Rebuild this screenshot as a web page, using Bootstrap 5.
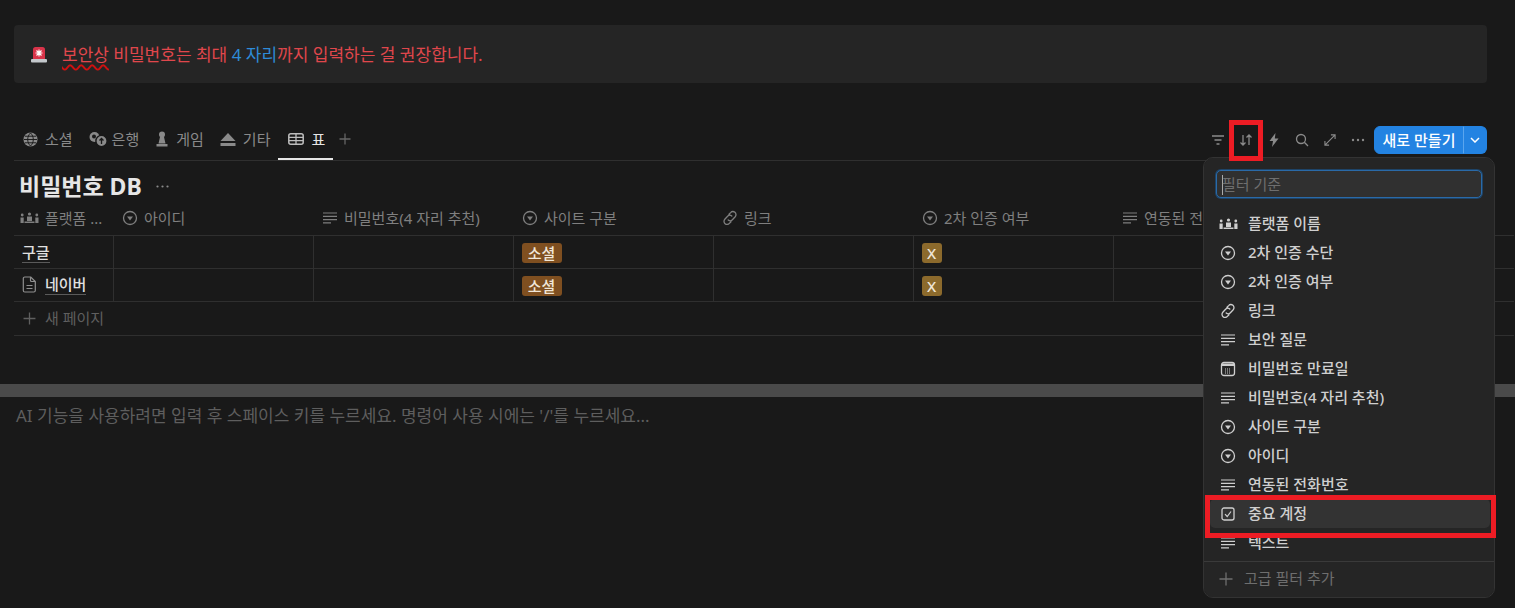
<!DOCTYPE html>
<html lang="ko">

<head>
  <meta charset="UTF-8" />
  <meta name="viewport" content="width=device-width, initial-scale=1" />
  <title>비밀번호 DB</title>
  <link href="https://cdn.jsdelivr.net/npm/bootstrap@5.3.3/dist/css/bootstrap.min.css" rel="stylesheet">
  <style>
    html, body {
      height: 608px;
      overflow: hidden;
    }

    body {
      background-color: #191919;
      color: #d4d4d4;
      font-family: "Noto Sans", "Noto Sans CJK KR", sans-serif;
      font-size: 15px;
      position: relative;
    }

    svg {
      flex: none;
      display: block;
    }

    .page-pad {
      padding: 25px 0 0 14px;
    }

    .notice-box {
      width: 1473px;
      height: 58px;
      background-color: #252525;
      border-radius: 4px;
      padding: 1px 0 0 16px;
      gap: 14px;
      font-size: 17px;
      color: #e0474c;
    }

    .notice-blue {
      color: #2e8bd8;
    }

    .notice-wavy {
      text-decoration: underline wavy #d01010 1.5px;
      text-underline-offset: 3px;
    }

    .view-bar {
      width: 1473px;
      height: 40px;
      margin-top: 38px;
      border-bottom: 1px solid #2f2f2f;
    }

    .view-tab {
      height: 39px;
      padding: 0 8px 3px;
      gap: 7px;
      color: #8a8a8a;
      white-space: nowrap;
    }

    .view-tab.on {
      color: #e6e6e6;
      border-bottom: 2px solid #e6e6e6;
      padding: 0 8px 1px 10px;
    }

    .tab-first {
      padding-left: 9px;
    }

    .tab-coin {
      gap: 5px;
    }

    .view-add {
      color: #666;
      margin: 0 0 3px 6px;
    }

    .tool-row {
      margin-top: 5px;
      height: 28px;
      color: #8a8a8a;
    }

    .tool-btn {
      width: 28px;
      height: 28px;
    }

    .new-group {
      margin-left: 2px;
      height: 28px;
    }

    .new-main, .new-caret {
      --bs-btn-bg: #2383e2;
      --bs-btn-border-color: #2383e2;
      --bs-btn-color: #fff;
      font-size: 15px;
      font-weight: 500;
      padding: 0;
      height: 28px;
      border-radius: 6px;
    }

    .new-main {
      width: 90px;
    }

    .new-caret {
      width: 24px;
      border-left-color: #5aa5ee;
    }

    .db-title {
      height: 43px;
      padding: 7px 0 0 5px;
      gap: 14px;
      font-size: 23px;
      font-weight: 700;
      color: #e6e6e6;
    }

    .db-title .title-dots {
      color: #8a8a8a;
    }

    .grid-wrap {
      width: 1501px;
      overflow: hidden;
    }

    .grid-table {
      --bs-table-bg: transparent;
      --bs-table-color: #d4d4d4;
      --bs-table-border-color: #2f2f2f;
      table-layout: fixed;
      width: 1500px;
      margin: 0;
    }

    .grid-table th, .grid-table td {
      padding: 0 8px;
      border-bottom: 1px solid #2f2f2f;
      vertical-align: middle;
      white-space: nowrap;
      overflow: hidden;
    }

    .grid-table th {
      height: 31px;
      padding: 0 0 2px 9px;
      font-weight: 400;
      color: #7f7f7f;
    }

    .grid-table th.head-first {
      padding-left: 6px;
    }

    .grid-table td {
      height: 33px;
    }

    .grid-table td + td {
      border-left: 1px solid #2f2f2f;
    }

    .head-cell {
      gap: 6px;
    }

    .page-name {
      display: inline-block;
      font-weight: 500;
      color: #e0e0e0;
      border-bottom: 1px solid #5a5a5a;
      line-height: 20px;
      vertical-align: middle;
    }

    .tag-social, .tag-x {
      border-radius: 3px;
      height: 20px;
      line-height: 20px;
      color: #f0e6d8;
      font-weight: 500;
      display: inline-block;
      vertical-align: middle;
    }

    .tag-social {
      width: 40px;
      text-align: center;
      background-color: #7f4f20;
    }

    .tag-x {
      width: 20px;
      text-align: center;
      background-color: #8c6a2c;
    }

    .grid-table td.add-row {
      height: 34px;
      padding-left: 9px;
      color: #5f5f5f;
    }

    .add-inner {
      gap: 9px;
    }

    .split-bar {
      height: 13px;
      margin-top: 48px;
      background-color: #4a4a4a;
    }

    .editor-hint {
      padding: 6px 0 0 16px;
      color: #5e5e5e;
      font-size: 17px;
    }

    .filter-menu {
      --bs-dropdown-bg: #252525;
      --bs-dropdown-border-color: #333;
      --bs-dropdown-border-radius: 10px;
      --bs-dropdown-padding-y: 0;
      --bs-dropdown-link-color: #cfcfcf;
      --bs-dropdown-font-size: 15px;
      left: 1203px;
      top: 157px;
      width: 292px;
      height: 441px;
    }

    .filter-input {
      display: block;
      width: 266px;
      height: 28px;
      margin: 12px 0 11px 12px;
      background: linear-gradient(#aaa, #aaa) no-repeat 5px 4px / 1px 20px, #303030;
      border: 1px solid #2a6aa8;
      box-shadow: 0 0 0 1px #1e4468;
      border-radius: 5px;
      color: #ddd;
      font-size: 15px;
      padding: 0 5px;
    }

    .filter-input::placeholder {
      color: #6e6e6e;
    }

    .filter-item {
      height: 29px;
      width: 280px;
      margin-left: 6px;
      padding: 0 0 0 10px;
      gap: 12px;
      border-radius: 5px;
      font-weight: 500;
    }

    .filter-item.people-item {
      padding-left: 9px;
      gap: 10px;
    }

    .filter-item.picked {
      background-color: #333;
    }

    .filter-foot {
      border-top: 1px solid #3a3a3a;
      margin-top: 4px;
      height: 34px;
      padding-left: 15px;
      gap: 11px;
      color: #6e6e6e;
    }

    .red-frame {
      position: absolute;
      border: 5px solid #ed1c24;
      pointer-events: none;
      z-index: 1050;
    }

    .frame-sort {
      left: 1229px;
      top: 120px;
      width: 34px;
      height: 41px;
    }

    .frame-item {
      left: 1205px;
      top: 495px;
      width: 291px;
      height: 43px;
    }
  </style>
</head>

<body>

  <!-- icons -->
  <svg width="0" height="0" class="position-absolute">
    <symbol id="ic-select" viewBox="0 0 16 16">
      <circle cx="8" cy="8" r="6.500" fill="none" stroke="currentColor" stroke-width="1.300" />
      <path d="M5 6.500h6L8 10.500z" fill="currentColor" />
    </symbol>
    <symbol id="ic-text" viewBox="0 0 16 16">
      <path d="M1 3h14M1 6.300h14M1 9.600h14M1 12.900h8" stroke="currentColor" stroke-width="1.200" fill="none" />
    </symbol>
    <symbol id="ic-link" viewBox="0 0 16 16">
      <path d="M7 4.300l1.600-1.700a3 3 0 0 1 4.600 4.100l-2.800 3a3 3 0 0 1-4.200.2M9 11.700l-1.600 1.700a3 3 0 0 1-4.600-4.100l2.800-3a3 3 0 0 1 4.200-.2" stroke="currentColor" stroke-width="1.300" fill="none" stroke-linecap="round" />
    </symbol>
    <symbol id="ic-people" viewBox="0 0 19 16">
      <g fill="currentColor">
        <circle cx="2.200" cy="5" r="1.400" /><circle cx="9.500" cy="4" r="1.600" /><circle cx="16.800" cy="5" r="1.400" />
        <path d="M0.500 7.500h3.200v5.500H0.500zM7 6.500h5v4.500H7zM15.300 7.500h3.200v5.500h-3.200zM4.500 11.500h10v1.500h-10z" />
      </g>
    </symbol>
  </svg>

  <div class="page-pad">
    <div class="notice-box d-flex align-items-center">
      <svg width="18" height="18" viewBox="0 0 18 18">
        <path d="M3 13V3.500A2.500 2.500 0 0 1 5.500 1h7A2.500 2.500 0 0 1 15 3.500V13z" fill="#d8344a" />
        <path d="M9 3.500v7M5.500 7h7M6.500 4.500l5 5M11.500 4.500l-5 5" stroke="#fff" stroke-width="1.100" />
        <rect x="1" y="13" width="16" height="3.500" rx="1" fill="#c4c8cc" />
      </svg>
      <span><span class="notice-wavy">보안상</span> 비밀번호는 최대 <span class="notice-blue">4 자리</span>까지 입력하는 걸 권장합니다.</span>
    </div>

    <div class="view-bar d-flex justify-content-between">
      <div class="d-flex align-items-center">
        <div class="view-tab tab-first d-flex align-items-center">
          <svg width="15" height="15" viewBox="0 0 16 16">
            <circle cx="8" cy="8" r="7.500" fill="#8a8a8a" />
            <path d="M1 8h14M8 1c-4 4-4 10 0 14M8 1c4 4 4 10 0 14M2 4.500h12M2 11.500h12" stroke="#191919" stroke-width="1" fill="none" />
          </svg>
          <span>소셜</span>
        </div>
        <div class="view-tab tab-coin d-flex align-items-center">
          <svg width="18" height="16" viewBox="0 0 18 16">
            <circle cx="5.500" cy="6" r="5" fill="#8a8a8a" />
            <circle cx="12.500" cy="10" r="5.600" fill="#8a8a8a" stroke="#191919" stroke-width="1.400" />
            <path d="M12.500 13V8M10.500 9.500l2-2 2 2" stroke="#191919" stroke-width="1.300" fill="none" />
            <circle cx="5" cy="5.500" r="2" fill="#191919" />
          </svg>
          <span>은행</span>
        </div>
        <div class="view-tab d-flex align-items-center">
          <svg width="14" height="16" viewBox="0 0 14 16">
            <circle cx="7" cy="3.500" r="3" fill="#8a8a8a" />
            <path d="M5 6h4l1.500 6.500h-7zM1.500 13h11v2.500h-11z" fill="#8a8a8a" />
          </svg>
          <span>게임</span>
        </div>
        <div class="view-tab d-flex align-items-center">
          <svg width="16" height="16" viewBox="0 0 16 16">
            <path d="M8 2l7.500 8H.5zM.5 12h15v3H.5z" fill="#8a8a8a" />
          </svg>
          <span>기타</span>
        </div>
        <div class="view-tab on d-flex align-items-center">
          <svg width="16" height="14" viewBox="0 0 16 14">
            <rect x=".8" y="1.800" width="14.400" height="10.400" rx="2" fill="none" stroke="#bdbdbd" stroke-width="1.500" />
            <path d="M1 5.300h14M1 8.700h14M8 2v10" stroke="#bdbdbd" stroke-width="1.300" />
          </svg>
          <span>표</span>
        </div>
        <svg class="view-add" width="12" height="12" viewBox="0 0 12 12">
          <path d="M6 .5v11M.5 6h11" stroke="currentColor" stroke-width="1.300" />
        </svg>
      </div>

      <div class="tool-row d-flex align-items-center">
        <div class="tool-btn d-flex align-items-center justify-content-center">
          <svg width="14" height="12" viewBox="0 0 14 12"><path d="M1 2h12M3.500 6h7M5.500 10h3" stroke="currentColor" stroke-width="1.300" /></svg>
        </div>
        <div class="tool-btn d-flex align-items-center justify-content-center">
          <svg width="14" height="14" viewBox="0 0 14 14"><path d="M4 2v10M1.500 9.500L4 12l2.500-2.500M10 12V2M7.500 4.500L10 2l2.500 2.500" stroke="currentColor" stroke-width="1.300" fill="none" /></svg>
        </div>
        <div class="tool-btn d-flex align-items-center justify-content-center">
          <svg width="10" height="14" viewBox="0 0 10 14"><path d="M6.500 0L.5 8h3.500L3 14l6.500-8.500H5.800z" fill="currentColor" /></svg>
        </div>
        <div class="tool-btn d-flex align-items-center justify-content-center">
          <svg width="14" height="14" viewBox="0 0 14 14"><circle cx="6" cy="6" r="4.500" fill="none" stroke="currentColor" stroke-width="1.300" /><path d="M9.300 9.300L13 13" stroke="currentColor" stroke-width="1.300" /></svg>
        </div>
        <div class="tool-btn d-flex align-items-center justify-content-center">
          <svg width="12" height="12" viewBox="0 0 13 13"><path d="M1 12L12 1M7.500 1H12v4.500M1 7.500V12h4.500" stroke="currentColor" stroke-width="1.200" fill="none" /></svg>
        </div>
        <div class="tool-btn d-flex align-items-center justify-content-center">
          <svg width="14" height="4" viewBox="0 0 14 4"><circle cx="2" cy="2" r="1.200" fill="currentColor" /><circle cx="7" cy="2" r="1.200" fill="currentColor" /><circle cx="12" cy="2" r="1.200" fill="currentColor" /></svg>
        </div>
        <div class="btn-group new-group">
          <button type="button" class="btn new-main">새로 만들기</button>
          <button type="button" class="btn new-caret d-flex align-items-center justify-content-center">
            <svg width="10" height="6" viewBox="0 0 10 6"><path d="M1 1l4 4 4-4" stroke="#fff" stroke-width="1.500" fill="none" /></svg>
          </button>
        </div>
      </div>
    </div>

    <div class="db-title d-flex align-items-center">
      <span>비밀번호 DB</span>
      <svg class="title-dots" width="13" height="3" viewBox="0 0 13 3"><circle cx="1.500" cy="1.500" r="1.100" fill="currentColor" /><circle cx="6.500" cy="1.500" r="1.100" fill="currentColor" /><circle cx="11.500" cy="1.500" r="1.100" fill="currentColor" /></svg>
    </div>

    <div class="grid-wrap">
      <table class="table grid-table">
        <colgroup>
          <col style="width: 99px">
          <col style="width: 200px">
          <col style="width: 200px">
          <col style="width: 200px">
          <col style="width: 200px">
          <col style="width: 200px">
          <col style="width: 401px">
        </colgroup>
        <thead>
          <tr>
            <th class="head-first"><div class="head-cell d-flex align-items-center"><svg width="19" height="16"><use href="#ic-people" /></svg><span>플랫폼 ...</span></div></th>
            <th><div class="head-cell d-flex align-items-center"><svg width="16" height="16"><use href="#ic-select" /></svg><span>아이디</span></div></th>
            <th><div class="head-cell d-flex align-items-center"><svg width="16" height="16"><use href="#ic-text" /></svg><span>비밀번호(4 자리 추천)</span></div></th>
            <th><div class="head-cell d-flex align-items-center"><svg width="16" height="16"><use href="#ic-select" /></svg><span>사이트 구분</span></div></th>
            <th><div class="head-cell d-flex align-items-center"><svg width="16" height="16"><use href="#ic-link" /></svg><span>링크</span></div></th>
            <th><div class="head-cell d-flex align-items-center"><svg width="16" height="16"><use href="#ic-select" /></svg><span>2차 인증 여부</span></div></th>
            <th><div class="head-cell d-flex align-items-center"><svg width="16" height="16"><use href="#ic-text" /></svg><span>연동된 전화번호</span></div></th>
          </tr>
        </thead>
        <tbody>
          <tr>
            <td><span class="page-name">구글</span></td>
            <td></td>
            <td></td>
            <td><span class="tag-social">소셜</span></td>
            <td></td>
            <td><span class="tag-x">X</span></td>
            <td></td>
          </tr>
          <tr>
            <td>
              <div class="d-flex align-items-center gap-2">
                <svg width="15" height="17" viewBox="0 0 15 17">
                  <path d="M2.800 1h6l4.500 4.500v9a1.500 1.500 0 0 1-1.500 1.500H2.800a1.500 1.500 0 0 1-1.500-1.500v-12A1.500 1.500 0 0 1 2.800 1zM8.500 1v3.500a1 1 0 0 0 1 1h3.800M4.500 9.500h6M4.500 12.500h6" fill="none" stroke="#8f8f8f" stroke-width="1.200" />
                </svg>
                <span class="page-name">네이버</span>
              </div>
            </td>
            <td></td>
            <td></td>
            <td><span class="tag-social">소셜</span></td>
            <td></td>
            <td><span class="tag-x">X</span></td>
            <td></td>
          </tr>
          <tr>
            <td colspan="7" class="add-row">
              <div class="add-inner d-flex align-items-center">
                <svg width="13" height="13" viewBox="0 0 12 12"><path d="M6 .5v11M.5 6h11" stroke="currentColor" stroke-width="1.200" /></svg>
                <span>새 페이지</span>
              </div>
            </td>
          </tr>
        </tbody>
      </table>
    </div>
  </div>

  <div class="split-bar"></div>
  <div class="editor-hint">AI 기능을 사용하려면 입력 후 스페이스 키를 누르세요. 명령어 사용 시에는 '/'를 누르세요...</div>

  <div class="dropdown-menu show filter-menu">
    <input class="filter-input" type="text" placeholder="필터 기준">
    <a class="dropdown-item filter-item people-item d-flex align-items-center" href="#"><svg width="19" height="16"><use href="#ic-people" /></svg><span>플랫폼 이름</span></a>
    <a class="dropdown-item filter-item d-flex align-items-center" href="#"><svg width="16" height="16"><use href="#ic-select" /></svg><span>2차 인증 수단</span></a>
    <a class="dropdown-item filter-item d-flex align-items-center" href="#"><svg width="16" height="16"><use href="#ic-select" /></svg><span>2차 인증 여부</span></a>
    <a class="dropdown-item filter-item d-flex align-items-center" href="#"><svg width="16" height="16"><use href="#ic-link" /></svg><span>링크</span></a>
    <a class="dropdown-item filter-item d-flex align-items-center" href="#"><svg width="16" height="16"><use href="#ic-text" /></svg><span>보안 질문</span></a>
    <a class="dropdown-item filter-item d-flex align-items-center" href="#">
      <svg width="16" height="16" viewBox="0 0 16 16">
        <rect x="1.500" y="1.500" width="13" height="13" rx="2.500" fill="none" stroke="currentColor" stroke-width="1.300" />
        <path d="M2 2.500h12v2.500H2z" fill="currentColor" />
        <path d="M5 8h6M5 10h6M5 12h6" stroke="currentColor" stroke-width="1" stroke-dasharray="1 1" />
      </svg>
      <span>비밀번호 만료일</span>
    </a>
    <a class="dropdown-item filter-item d-flex align-items-center" href="#"><svg width="16" height="16"><use href="#ic-text" /></svg><span>비밀번호(4 자리 추천)</span></a>
    <a class="dropdown-item filter-item d-flex align-items-center" href="#"><svg width="16" height="16"><use href="#ic-select" /></svg><span>사이트 구분</span></a>
    <a class="dropdown-item filter-item d-flex align-items-center" href="#"><svg width="16" height="16"><use href="#ic-select" /></svg><span>아이디</span></a>
    <a class="dropdown-item filter-item d-flex align-items-center" href="#"><svg width="16" height="16"><use href="#ic-text" /></svg><span>연동된 전화번호</span></a>
    <a class="dropdown-item filter-item picked d-flex align-items-center" href="#">
      <svg width="16" height="16" viewBox="0 0 16 16">
        <rect x="2" y="2" width="12" height="12" rx="2" fill="none" stroke="currentColor" stroke-width="1.300" />
        <path d="M5 8.200l2.200 2.300L11 5.500" fill="none" stroke="currentColor" stroke-width="1.200" />
      </svg>
      <span>중요 계정</span>
    </a>
    <a class="dropdown-item filter-item d-flex align-items-center" href="#"><svg width="16" height="16"><use href="#ic-text" /></svg><span>텍스트</span></a>
    <div class="filter-foot d-flex align-items-center">
      <svg width="14" height="14" viewBox="0 0 14 14"><path d="M7 .5v13M.5 7h13" stroke="currentColor" stroke-width="1.300" /></svg>
      <span>고급 필터 추가</span>
    </div>
  </div>

  <div class="red-frame frame-sort"></div>
  <div class="red-frame frame-item"></div>

  <script src="https://cdn.jsdelivr.net/npm/bootstrap@5.3.3/dist/js/bootstrap.bundle.min.js"></script>
</body>

</html>
